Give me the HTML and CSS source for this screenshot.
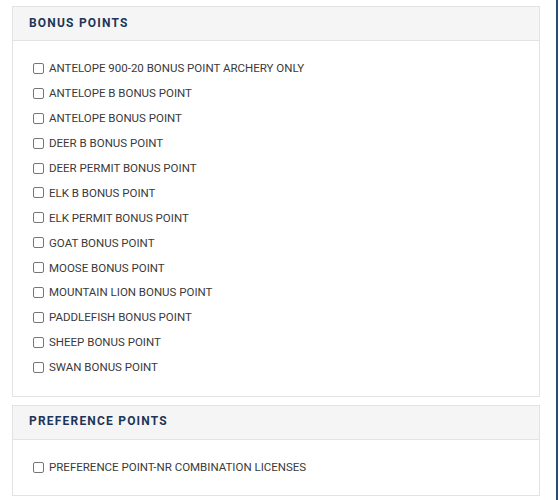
FILE: index.html
```html
<!DOCTYPE html>
<html>
<head>
<meta charset="utf-8">
<link rel="stylesheet" href="styles.css">
</head>
<body>
<div class="page">
  <div class="content">
    <section class="panel">
      <div class="panel-head">BONUS POINTS</div>
      <div class="panel-body">
        <label class="row"><input type="checkbox"><span>ANTELOPE 900-20 BONUS POINT ARCHERY ONLY</span></label>
        <label class="row"><input type="checkbox"><span>ANTELOPE B BONUS POINT</span></label>
        <label class="row"><input type="checkbox"><span>ANTELOPE BONUS POINT</span></label>
        <label class="row"><input type="checkbox"><span>DEER B BONUS POINT</span></label>
        <label class="row"><input type="checkbox"><span>DEER PERMIT BONUS POINT</span></label>
        <label class="row"><input type="checkbox"><span>ELK B BONUS POINT</span></label>
        <label class="row"><input type="checkbox"><span>ELK PERMIT BONUS POINT</span></label>
        <label class="row"><input type="checkbox"><span>GOAT BONUS POINT</span></label>
        <label class="row"><input type="checkbox"><span>MOOSE BONUS POINT</span></label>
        <label class="row"><input type="checkbox"><span>MOUNTAIN LION BONUS POINT</span></label>
        <label class="row"><input type="checkbox"><span>PADDLEFISH BONUS POINT</span></label>
        <label class="row"><input type="checkbox"><span>SHEEP BONUS POINT</span></label>
        <label class="row"><input type="checkbox"><span>SWAN BONUS POINT</span></label>
      </div>
    </section>
    <section class="panel">
      <div class="panel-head">PREFERENCE POINTS</div>
      <div class="panel-body">
        <label class="row"><input type="checkbox"><span>PREFERENCE POINT-NR COMBINATION LICENSES</span></label>
      </div>
    </section>
  </div>
  <div class="edge"></div>
</div>
</body>
</html>
```
FILE: styles.css
```css
html, body {
  margin: 0;
  padding: 0;
  background: #fff;
}
body {
  font-family: Roboto, "Liberation Sans", sans-serif;
}
.page {
  display: flex;
  width: 560px;
  height: 500px;
  overflow: hidden;
}
.content {
  width: 528px;
  margin: 6px 0 0 12px;
  display: flex;
  flex-direction: column;
  gap: 8px;
}
.edge {
  width: 2px;
  height: 500px;
  background: #2c4a70;
  margin-left: 16px;
}
.panel {
  border: 1px solid #e3e3e3;
  background: #fff;
}
.panel-head {
  background: #f5f5f5;
  border-bottom: 1px solid #e3e3e3;
  height: 34px;
  box-sizing: border-box;
  padding: 0 0 2px 16px;
  display: flex;
  align-items: center;
  font-size: 12px;
  font-weight: 700;
  letter-spacing: 1.2px;
  color: #1d3557;
}
.panel-body {
  padding: 15px 20px 16px 20px;
  display: flex;
  flex-direction: column;
}
.row {
  height: 24.9px;
  display: flex;
  align-items: center;
  font-size: 11.5px;
  color: #3a3a3a;
}
.row input {
  width: 11px;
  height: 11px;
  margin: 0 5px 0 0;
  appearance: none;
  -webkit-appearance: none;
  border: 1px solid #767676;
  border-radius: 2px;
  background: #fff;
}
```
